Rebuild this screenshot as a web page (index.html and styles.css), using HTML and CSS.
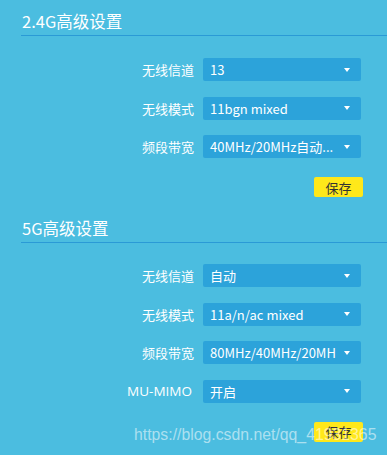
FILE: index.html
```html
<!DOCTYPE html>
<html lang="zh-CN">
<head>
    <meta charset="UTF-8">
    <meta name="viewport" content="width=device-width, initial-scale=1.0">
    <title>高级设置</title>
    <link rel="stylesheet" href="styles.css">
</head>
<body>

    <!-- 2.4G -->
    <div class="panel">
        <h2 class="panel-title">2.4G高级设置</h2>
        <div class="form">
            <div class="row">
                <label>无线信道</label>
                <div class="select"><span>13</span><i class="caret"></i></div>
            </div>
            <div class="row">
                <label>无线模式</label>
                <div class="select"><span>11bgn mixed</span><i class="caret"></i></div>
            </div>
            <div class="row">
                <label>频段带宽</label>
                <div class="select"><span>40MHz/20MHz自动...</span><i class="caret"></i></div>
            </div>
        </div>
        <div class="actions">
            <button class="btn-save">保存</button>
        </div>
    </div>

    <!-- 5G -->
    <div class="panel panel-5g">
        <h2 class="panel-title">5G高级设置</h2>
        <div class="form">
            <div class="row">
                <label>无线信道</label>
                <div class="select"><span>自动</span><i class="caret"></i></div>
            </div>
            <div class="row">
                <label>无线模式</label>
                <div class="select"><span>11a/n/ac mixed</span><i class="caret"></i></div>
            </div>
            <div class="row">
                <label>频段带宽</label>
                <div class="select"><span>80MHz/40MHz/20MH</span><i class="caret"></i></div>
            </div>
            <div class="row">
                <label class="latin">MU-MIMO</label>
                <div class="select"><span>开启</span><i class="caret"></i></div>
            </div>
        </div>
        <div class="actions">
            <button class="btn-save">保存</button>
        </div>
    </div>

    <div class="watermark">https://blog.csdn.net/qq_41931365</div>

</body>
</html>
```

FILE: styles.css
```css
body {
    margin: 0;
    padding: 0;
    background-color: #4bbde0;
    color: #fff;
    font-family: "Noto Sans CJK SC", "Noto Sans", sans-serif;
    width: 387px;
    height: 455px;
    overflow: hidden;
    position: relative;
}
.panel {
    padding-left: 21px;
}
.panel-title {
    margin: 0;
    padding: 8px 0 0 1px;
    height: 27px;
    line-height: 26px;
    font-size: 16.5px;
    font-weight: 400;
    border-bottom: 1px solid #2a9ad6;
}
.form {
    padding-top: 22px;
}
.row {
    display: flex;
    align-items: center;
    height: 23px;
    margin-bottom: 15.5px;
}
.row label {
    width: 173px;
    text-align: right;
    font-size: 13px;
    margin-right: 9px;
}
.row label.latin {
    font-family: "Open Sans", "Noto Sans", sans-serif;
    font-size: 13.5px;
    padding-right: 2px;
    box-sizing: border-box;
}
.select {
    width: 158px;
    height: 23px;
    box-sizing: border-box;
    background-color: #2ca3da;
    border-radius: 2px;
    display: flex;
    align-items: center;
    justify-content: space-between;
    padding: 0 11px 0 7px;
    font-size: 13px;
}
.caret {
    width: 0;
    height: 0;
    border-left: 3px solid transparent;
    border-right: 3px solid transparent;
    border-top: 4px solid #fff;
}
.actions {
    width: 342px;
    display: flex;
    justify-content: flex-end;
    padding-top: 3.5px;
}
.btn-save {
    width: 49px;
    height: 20px;
    border: none;
    border-radius: 2px;
    background-color: #ffe81a;
    color: #333;
    font-family: "Noto Sans CJK SC", sans-serif;
    font-size: 13px;
    padding: 0;
    cursor: pointer;
}
.panel-5g {
    margin-top: 10px;
}
.panel-5g .form {
    padding-top: 21px;
}
.watermark {
    position: absolute;
    left: 134px;
    top: 427px;
    font-family: "Liberation Sans", Arial, sans-serif;
    font-size: 15.8px;
    line-height: 16px;
    color: rgba(255, 255, 255, 0.55);
    white-space: nowrap;
}
```
